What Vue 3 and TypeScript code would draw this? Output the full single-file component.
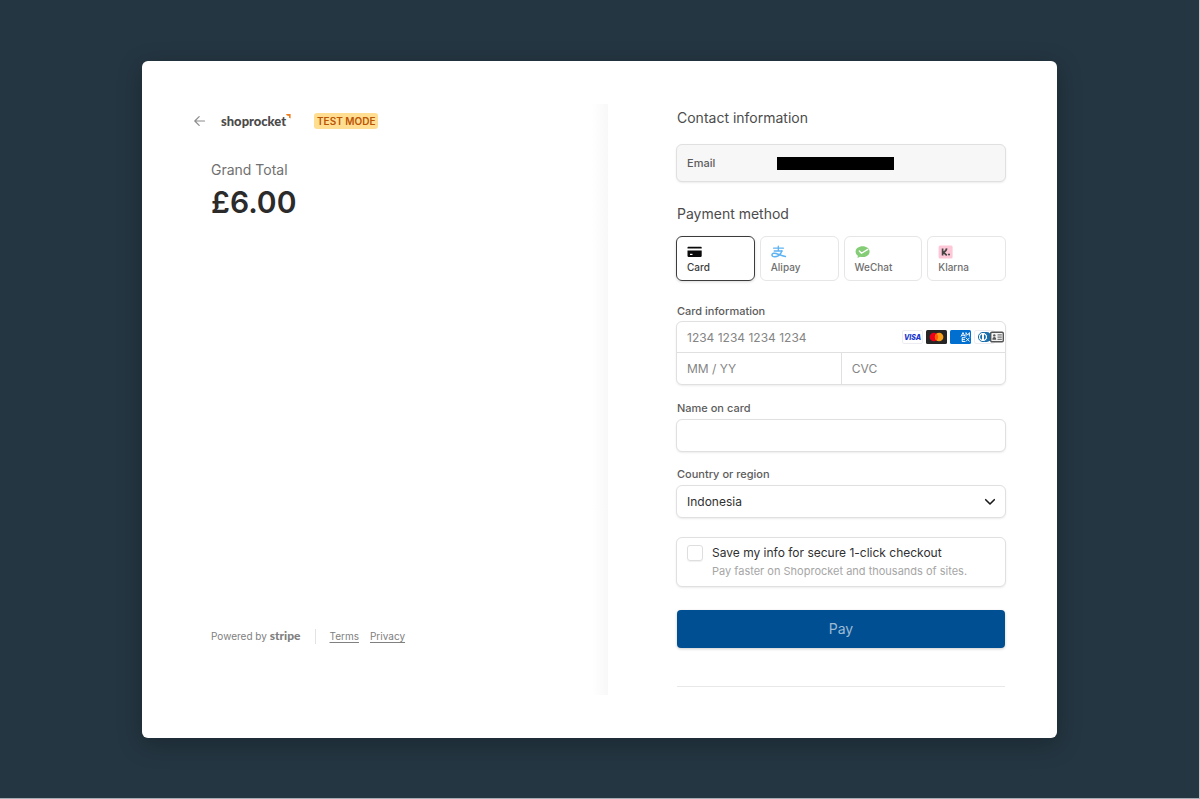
<script setup lang="ts">
import { ref } from 'vue'

type MethodId = 'card' | 'alipay' | 'wechat' | 'klarna'

const methods: { id: MethodId; label: string }[] = [
  { id: 'card', label: 'Card' },
  { id: 'alipay', label: 'Alipay' },
  { id: 'wechat', label: 'WeChat' },
  { id: 'klarna', label: 'Klarna' },
]

const method = ref<MethodId>('card')
const cardNumber = ref('')
const expiry = ref('')
const cvc = ref('')
const holder = ref('')
const country = ref('Indonesia')
const saveInfo = ref(false)
</script>

<template>
  <div class="page">
    <main class="checkout">
      <section class="summary">
        <header class="brand">
          <a class="back" href="#" aria-label="Back">
            <svg width="12" height="12" viewBox="0 0 12 12" fill="none" stroke="#8c8c8c" stroke-width="1.2" stroke-linecap="round" stroke-linejoin="round">
              <path d="M10.500 6H1M5.200 1.600 .8 6l4.400 4.400" />
            </svg>
          </a>
          <span class="logo">
            shoprocket
            <svg class="flame" width="5" height="5" viewBox="0 0 5 5"><path d="M0 0h4.600v4.600L3 3.800V1.900L.8 1.400z" fill="#ee7c1b" /></svg>
          </span>
          <span class="badge">TEST MODE</span>
        </header>
        <div class="total">
          <p class="total-label">Grand Total</p>
          <p class="total-value">£6.00</p>
        </div>
        <footer class="legal">
          <span>Powered by <b class="stripe">stripe</b></span>
          <span class="rule"></span>
          <a href="#">Terms</a>
          <a href="#">Privacy</a>
        </footer>
      </section>

      <form class="payment" @submit.prevent>
        <h2>Contact information</h2>
        <div class="box email">
          <span class="email-label">Email</span>
          <span class="redacted"></span>
        </div>

        <h2 id="method-title" class="method-title">Payment method</h2>
        <div class="methods" role="radiogroup" aria-labelledby="method-title">
          <label v-for="m in methods" :key="m.id" class="method" :class="{ active: method === m.id }">
            <input v-model="method" type="radio" name="method" :value="m.id" />
            <svg v-if="m.id === 'card'" width="16" height="14" viewBox="0 0 16 14">
              <path d="M1.200 1.800h12.800a.7.7 0 0 1 .7.7v1H.5v-1a.7.7 0 0 1 .7-.7zM.5 5.500h14.200v5.300a1.200 1.200 0 0 1-1.200 1.200H1.700a1.200 1.200 0 0 1-1.200-1.200z" fill="#0a0a0a" />
              <path d="M3 8.800h2.500v1.200H3z" fill="#fff" />
            </svg>
            <svg v-else-if="m.id === 'alipay'" width="16" height="14" viewBox="0 0 16 14" fill="none" stroke="#5eb3f2" stroke-linecap="round">
              <path d="M2.600 3.200h9.800M7.300 1.200v4.600M3.200 6h7.700" stroke-width="1.300" />
              <path d="M10.900 6C9.800 9 7.200 11.600 3.900 11.800 1.900 11.900.8 10.900 1 9.700c.3-1.500 2.200-1.800 4.200-1.200 2.600.8 5 2.100 9.200 3.100" stroke-width="1.500" />
            </svg>
            <svg v-else-if="m.id === 'wechat'" width="16" height="14" viewBox="0 0 16 14">
              <path d="M7.600 1.300C3.700 1.300.6 3.600.6 6.700c0 1.700.9 3.100 2.300 4l-.4 2.400 2.500-1.400c.8.2 1.700.4 2.600.4 3.900 0 7-2.300 7-5.400S11.500 1.300 7.600 1.300z" fill="#84cd76" />
              <path d="M4.300 6 6.500 8.300 12.800 4.400" fill="none" stroke="#fff" stroke-width="1.300" stroke-linecap="round" stroke-linejoin="round" />
            </svg>
            <svg v-else width="16" height="14" viewBox="0 0 16 14">
              <rect x=".6" y=".4" width="14" height="13.200" rx="1.500" fill="#fdc7d7" />
              <path d="M4.600 3.400v7M8.600 3.400C8.500 5.300 7.300 6.600 5.300 7.200l3.500 3.200" fill="none" stroke="#454545" stroke-width="1.700" />
              <circle cx="11" cy="9.500" r="1" fill="#454545" />
            </svg>
            <span>{{ m.label }}</span>
          </label>
        </div>

        <label class="caption card-caption" for="card-number">Card information</label>
        <div class="box card-box">
          <div class="number-row">
            <input id="card-number" v-model="cardNumber" type="text" placeholder="1234 1234 1234 1234" />
            <span class="networks">
              <svg width="21" height="14" viewBox="0 0 21 14">
                <rect x=".5" y=".5" width="20" height="13" rx="1.500" fill="#fff" stroke="#ededf1" />
                <text x="10.500" y="9.700" text-anchor="middle" class="visa">VISA</text>
              </svg>
              <svg width="21" height="14" viewBox="0 0 21 14">
                <rect width="21" height="14" rx="1.500" fill="#252525" />
                <circle cx="7.900" cy="7" r="4.300" fill="#eb001b" />
                <circle cx="13.100" cy="7" r="4.300" fill="#f79e1b" />
                <path d="M10.500 3.600a4.300 4.300 0 0 1 0 6.800 4.300 4.300 0 0 1 0-6.800z" fill="#ff5f00" />
              </svg>
              <svg width="21" height="14" viewBox="0 0 21 14">
                <rect width="21" height="14" rx="1.500" fill="#016fd0" />
                <g fill="none" stroke="#fff" stroke-width=".9">
                  <path d="M11 6.600 13 2.500l2 4.100M11.800 5.300h2.500M16 6.600v-4l1.700 2.500 1.700-2.500v4M12 7.700h3.200M12 9.600h3M12 11.500h3.200M12.200 7.700v3.800M15.800 7.700l3.800 3.800M19.600 7.700l-3.800 3.800" />
                </g>
              </svg>
              <span class="last-network">
                <svg width="21" height="14" viewBox="0 0 21 14">
                  <rect x=".5" y=".5" width="20" height="13" rx="1.500" fill="#fff" stroke="#ededf1" />
                  <path d="M9.300 2h3.200a5 5 0 0 1 0 10H9.300z" fill="#176da9" />
                  <circle cx="9" cy="7" r="4.600" fill="#fff" stroke="#176da9" stroke-width="1" />
                  <path d="M8 4.200a3 3 0 0 0 0 5.600zM10 4.200a3 3 0 0 1 0 5.600z" fill="#176da9" />
                </svg>
                <svg class="autofill" width="14" height="12" viewBox="0 0 14 12">
                  <rect x=".7" y="1.200" width="12.600" height="9.600" rx="1.200" fill="#f4f4f4" stroke="#555" stroke-width="1.400" />
                  <circle cx="4.300" cy="4.400" r="1.200" fill="#555" />
                  <path d="M2.400 8.700c0-1.700.7-2.600 1.900-2.600s1.900.9 1.900 2.600z" fill="#555" />
                  <path d="M7.500 3.900h4.300M7.500 6.100h4.300M7.500 8.300h4.300" stroke="#555" stroke-width="1" />
                </svg>
              </span>
            </span>
          </div>
          <div class="code-row">
            <input v-model="expiry" type="text" placeholder="MM / YY" aria-label="Expiry date" />
            <input v-model="cvc" type="text" placeholder="CVC" aria-label="CVC" />
          </div>
        </div>

        <label class="caption" for="holder">Name on card</label>
        <input id="holder" v-model="holder" class="box field" type="text" />

        <label class="caption" for="country">Country or region</label>
        <div class="select-wrap">
          <select id="country" v-model="country" class="box field">
            <option>Indonesia</option>
            <option>United Kingdom</option>
          </select>
          <svg class="chevron" width="12" height="8" viewBox="0 0 12 8" fill="none" stroke="#1a1a1a" stroke-width="1.600" stroke-linecap="round" stroke-linejoin="round">
            <path d="M1.700 1.700 6 6l4.300-4.300" />
          </svg>
        </div>

        <div class="box save">
          <input id="save" v-model="saveInfo" type="checkbox" />
          <label for="save">
            <span class="save-title">Save my info for secure 1-click checkout</span>
            <span class="save-note">Pay faster on Shoprocket and thousands of sites.</span>
          </label>
        </div>

        <button class="pay" type="submit">Pay</button>
        <hr />
      </form>
    </main>
  </div>
</template>

<style>
body {
  margin: 0;
}
</style>

<style scoped>
* {
  box-sizing: border-box;
}
.page {
  min-height: 100vh;
  padding: 61px 142px 60px;
  background: #243642;
  border-right: 1px solid #c3c9cd;
  border-bottom: 1px solid #a5adb3;
  font-family: Inter, "Liberation Sans", sans-serif;
  color: #5c5c5c;
}
.checkout {
  display: grid;
  grid-template-columns: 466fr 449fr;
  padding: 43px 0;
  background: #fff;
  border-radius: 6px;
  box-shadow: 0 6px 24px rgba(0, 0, 0, 0.25);
}
.summary {
  display: flex;
  flex-direction: column;
  padding: 7px 52px 51px;
  background: linear-gradient(to left, #f8f8f8, #fff 16px);
}
.brand {
  display: flex;
  align-items: center;
  height: 20px;
}
.back {
  display: flex;
  width: 27px;
}
.logo {
  display: flex;
  width: 93px;
  font: 900 13px/20px Lato, sans-serif;
  color: #4a4a4a;
}
.flame {
  margin-top: 3px;
}
.badge {
  padding: 0 3px;
  border-radius: 3px;
  background: #ffde92;
  color: #bb5504;
  font-size: 10px;
  font-weight: 600;
  line-height: 16px;
}
.total {
  flex: 1;
  padding: 29px 17px 0;
}
.total p {
  margin: 0;
}
.total-label {
  font-size: 14px;
  line-height: 20px;
  color: #707070;
}
.total-value {
  font-size: 30px;
  line-height: 44px;
  font-weight: 600;
  color: #2b2b2b;
}
.legal {
  display: flex;
  align-items: center;
  gap: 11px;
  padding-left: 17px;
  font-size: 10px;
  line-height: 16px;
  color: #808080;
}
.stripe {
  font: 900 12px/14px Lato, sans-serif;
}
.rule {
  width: 1px;
  height: 15px;
  margin: 0 3px;
  background: #e3e3e3;
}
.legal a {
  color: inherit;
  text-underline-offset: 2px;
}
.payment {
  display: flex;
  flex-direction: column;
  padding: 4px 51px 8px 68px;
}
h2 {
  margin: 0 1px 16px;
  font-size: 14px;
  line-height: 20px;
  font-weight: 400;
  color: #4c4c4c;
}
.box {
  border: 1px solid #e0e0e0;
  border-radius: 6px;
  background: #fff;
  box-shadow: 0 1px 2px rgba(0, 0, 0, 0.08);
}
.email {
  display: flex;
  align-items: center;
  height: 38px;
  padding: 0 10px;
  background: #f7f7f7;
}
.email-label {
  width: 90px;
  font-size: 11px;
  font-weight: 500;
}
.redacted {
  width: 117px;
  height: 13px;
  background: #000;
}
.method-title {
  margin: 22px 1px 12px;
}
.methods {
  display: grid;
  grid-template-columns: repeat(4, 1fr);
  gap: 5px;
}
.method {
  position: relative;
  display: flex;
  flex-direction: column;
  height: 45px;
  padding: 8px 10px 0;
  border: 1px solid #e6e6e6;
  border-radius: 6px;
  color: #707070;
  font-size: 10px;
  line-height: 16px;
  font-weight: 500;
}
.method svg {
  flex: none;
}
.method.active {
  border-color: #3c3c3c;
  color: #3c3c3c;
  box-shadow: 0 1px 3px rgba(0, 0, 0, 0.15);
}
.method input {
  position: absolute;
  inset: 0;
  margin: 0;
  opacity: 0;
}
.caption {
  margin: 14px 1px 2px;
  font-size: 11px;
  line-height: 18px;
  font-weight: 500;
}
.card-caption {
  margin: 21px 1px 1px;
}
.card-box {
  height: 64px;
}
.card-box input {
  min-width: 0;
  width: 100%;
  height: 31px;
  padding: 0 10px;
  border: 0;
  background: none;
  font: 12px/18px Inter, "Liberation Sans", sans-serif;
  outline: none;
}
.card-box input::placeholder {
  color: #858585;
  opacity: 1;
}
.number-row,
.code-row {
  display: flex;
  align-items: center;
}
.number-row {
  border-bottom: 1px solid #e0e0e0;
  height: 31px;
}
.code-row input + input {
  border-left: 1px solid #e0e0e0;
}
.networks {
  display: flex;
  gap: 3px;
  padding-right: 1px;
}
.networks svg {
  display: block;
}
.last-network {
  position: relative;
  width: 30px;
}
.autofill {
  position: absolute;
  right: 0;
  top: 1px;
}
.visa {
  font: italic 800 7px Inter, sans-serif;
  fill: #1a35cf;
}
.field {
  width: 100%;
  height: 33px;
  padding: 0 10px;
  font: 12px/18px Inter, "Liberation Sans", sans-serif;
  color: #303030;
  appearance: none;
}
select.field {
  display: block;
}
.select-wrap {
  position: relative;
}
.chevron {
  position: absolute;
  right: 10px;
  top: 13px;
  pointer-events: none;
}
#holder + .caption {
  margin-top: 13px;
}
.save {
  display: flex;
  gap: 9px;
  height: 50px;
  margin-top: 19px;
  padding: 5px 10px;
}
.save input {
  appearance: none;
  width: 16px;
  height: 16px;
  margin: 2px 0 0;
  border: 1px solid #dedede;
  border-radius: 3px;
  box-shadow: 0 1px 1px rgba(0, 0, 0, 0.06);
}
.save span {
  display: block;
}
.save-title {
  font-size: 12px;
  line-height: 19px;
  color: #303030;
}
.save-note {
  font-size: 11px;
  line-height: 19px;
  color: #a6a6a6;
}
.pay {
  height: 38px;
  margin: 23px 1px 0;
  border: 0;
  border-radius: 4px;
  background: #004f92;
  box-shadow: 0 1px 3px rgba(0, 0, 0, 0.2);
  color: #9dbad4;
  font: 400 14px/20px Inter, "Liberation Sans", sans-serif;
}
hr {
  width: calc(100% - 2px);
  height: 1px;
  margin: 38px 1px 0;
  border: 0;
  background: #e8e8e8;
}
</style>
